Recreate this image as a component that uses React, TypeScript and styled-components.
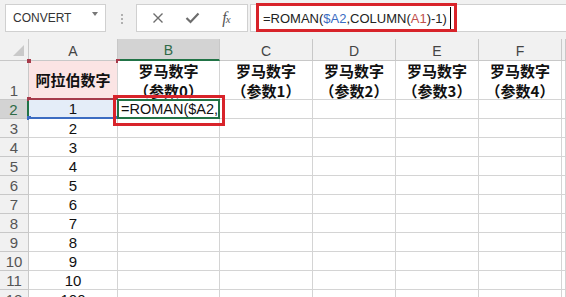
import styled, { createGlobalStyle } from 'styled-components';

const GlobalStyle = createGlobalStyle`
  html, body {
    margin: 0;
    padding: 0;
    background: #ffffff;
    overflow: hidden;
  }
  body {
    font-family: "Liberation Sans", Arial, sans-serif;
  }
`

const Page = styled.div`
  position: relative;
  width: 566px;
  height: 297px;
  overflow: hidden;
`

const Toolbar = styled.div`
  display: flex;
  align-items: flex-start;
  height: 39px;
  padding-top: 4px;
  box-sizing: border-box;
  background: #f1f1f1;
`

const NameBox = styled.div`
  display: flex;
  align-items: center;
  justify-content: space-between;
  width: 101px;
  height: 28px;
  margin-left: 5px;
  padding: 0 7px 0 7px;
  box-sizing: border-box;
  background: #fff;
  border: 1px solid #d0d0d0;
  font-size: 12px;
  color: #333;
`

const Caret = styled.span`
  width: 0;
  height: 0;
  border-left: 3px solid transparent;
  border-right: 3px solid transparent;
  border-top: 4px solid #777;
  margin-bottom: 8px;
`

const Dots = styled.div`
  display: flex;
  flex-direction: column;
  gap: 2px;
  margin: 10px 13px 0 15px;
  span {
    width: 2px;
    height: 2px;
    background: #b0b0b0;
  }
`

const ButtonBox = styled.div`
  display: flex;
  align-items: center;
  justify-content: space-around;
  width: 112px;
  height: 28px;
  box-sizing: border-box;
  padding: 0 4px;
  background: #fff;
  border: 1px solid #d0d0d0;
`

const IconSlot = styled.span`
  display: flex;
  align-items: center;
  justify-content: center;
  width: 24px;
  height: 20px;
  color: #6d6d6d;
`

const Fx = styled.span`
  font-family: "Liberation Serif", "Times New Roman", serif;
  font-style: italic;
  font-size: 16px;
  color: #555;
  letter-spacing: -1px;
  sub {
    font-size: 11px;
    vertical-align: baseline;
  }
`

const FormulaBox = styled.div`
  display: flex;
  align-items: center;
  flex: 1;
  height: 28px;
  margin-left: 2px;
  padding-left: 12px;
  box-sizing: border-box;
  background: #fff;
  border-top: 1px solid #d0d0d0;
  border-bottom: 1px solid #d0d0d0;
  border-left: 1px solid #d0d0d0;
  font-size: 13px;
  color: #222;
  white-space: nowrap;
`

const Ref = styled.span<{ $tone: string }>`
  color: ${p => p.$tone};
`

const Cursor = styled.span`
  display: inline-block;
  width: 1px;
  height: 22px;
  margin-left: 3px;
  background: #000;
`

const Sheet = styled.div`
  display: grid;
  grid-template-columns: 29px 89px 102px 93px 83px 83px 83px 4px;
  grid-template-rows: 22px 39px repeat(11, 19px);
  font-family: "Liberation Sans", Arial, sans-serif;
`

const Corner = styled.div`
  position: relative;
  background: #f1f1f1;
  border-right: 1px solid #c8c8c8;
  border-bottom: 1px solid #c8c8c8;
  &::after {
    content: "";
    position: absolute;
    right: 4px;
    bottom: 4px;
    width: 0;
    height: 0;
    border-left: 11px solid transparent;
    border-bottom: 11px solid #c9c9c9;
  }
`

const ColHead = styled.div<{ $active?: boolean }>`
  display: flex;
  align-items: center;
  justify-content: center;
  box-sizing: border-box;
  background: ${p => (p.$active ? '#d3d3d3' : '#f1f1f1')};
  color: ${p => (p.$active ? '#2f6a46' : '#444')};
  font-size: 14px;
  border-right: 1px solid #c8c8c8;
  border-bottom: ${p => (p.$active ? '2px solid #217346' : '1px solid #c8c8c8')};
  padding-top: 2px;
`

const RowHead = styled.div<{ $active?: boolean; $tall?: boolean }>`
  display: flex;
  align-items: ${p => (p.$tall ? 'flex-end' : 'center')};
  justify-content: center;
  box-sizing: border-box;
  background: ${p => (p.$active ? '#d3d3d3' : '#f1f1f1')};
  color: ${p => (p.$active ? '#2f6a46' : '#555')};
  font-size: 15px;
  border-right: ${p => (p.$active ? '2px solid #217346' : '1px solid #c8c8c8')};
  border-bottom: 1px solid #c8c8c8;
`

const Cell = styled.div<{ $fill?: string; $edge?: string }>`
  position: relative;
  display: flex;
  align-items: center;
  justify-content: center;
  box-sizing: border-box;
  background: ${p => p.$fill || '#fff'};
  border-right: 1px solid #d4d4d4;
  border-bottom: ${p => (p.$edge ? `2px solid ${p.$edge}` : '1px solid #d4d4d4')};
  font-size: 15px;
  color: #111;
  white-space: nowrap;
`

const HeadText = styled.div`
  font-family: "Noto Sans CJK SC", "Noto Sans", sans-serif;
  font-weight: 700;
  font-size: 15px;
  line-height: 20px;
  color: #111;
  text-align: center;
  margin-top: 1px;
`

const Handle = styled.span<{ $tone: string; $x: 'l' | 'r'; $y: 't' | 'b' }>`
  position: absolute;
  width: 4px;
  height: 4px;
  background: ${p => p.$tone};
  ${p => (p.$x === 'l' ? 'left: -2px;' : 'right: -3px;')}
  ${p => (p.$y === 't' ? 'top: -2px;' : 'bottom: -3px;')}
`

const EditCell = styled.div`
  position: relative;
  display: flex;
  align-items: center;
  box-sizing: border-box;
  overflow: hidden;
  border: 2px solid #217346;
  margin: -1px 0 0 -1px;
  padding-left: 2px;
  font-size: 14.5px;
  color: #111;
  white-space: nowrap;
  background: #fff;
`

const Mark = styled.div`
  position: absolute;
  border: 3px solid #d8232a;
  box-sizing: border-box;
  pointer-events: none;
`

const XIcon = () => (
  <svg width="12" height="12" viewBox="0 0 12 12">
    <path d="M1.5 1.5 L10.5 10.5 M10.5 1.5 L1.5 10.5" stroke="currentColor" strokeWidth="1.4" fill="none" />
  </svg>
)

const CheckIcon = () => (
  <svg width="15" height="12" viewBox="0 0 15 12">
    <path d="M1.5 6 L5.5 10 L13.5 1.5" stroke="currentColor" strokeWidth="2.2" fill="none" />
  </svg>
)

const headers = ['A', 'B', 'C', 'D', 'E', 'F']

export default function App() {
  const rows = [2, 3, 4, 5, 6, 7, 8, 9, 10, 11, 12]

  return (
    <>
      <GlobalStyle />
      <Page>
        <Toolbar>
          <NameBox>
            <span>CONVERT</span>
            <Caret />
          </NameBox>
          <Dots><span /><span /><span /></Dots>
          <ButtonBox>
            <IconSlot><XIcon /></IconSlot>
            <IconSlot><CheckIcon /></IconSlot>
            <IconSlot><Fx>f<sub>x</sub></Fx></IconSlot>
          </ButtonBox>
          <FormulaBox>
            =ROMAN(<Ref $tone="#3b6cc2">$A2</Ref>,COLUMN(<Ref $tone="#c0504d">A1</Ref>)-1)
            <Cursor />
          </FormulaBox>
        </Toolbar>

        <Sheet>
          <Corner />
          {headers.map(h => (
            <ColHead key={h} $active={h === 'B'}>{h}</ColHead>
          ))}
          <ColHead />

          {/* row 1: titles */}
          <RowHead $tall>1</RowHead>
          <Cell $fill="#fbe4e4" $edge="#a63a4a">
            <HeadText>阿拉伯数字</HeadText>
            <Handle $tone="#a63a4a" $x="l" $y="t" />
            <Handle $tone="#a63a4a" $x="r" $y="t" />
            <Handle $tone="#a63a4a" $x="l" $y="b" />
            <Handle $tone="#a63a4a" $x="r" $y="b" />
          </Cell>
          {[0, 1, 2, 3, 4].map(n => (
            <Cell key={n}>
              <HeadText>罗马数字<br />（参数{n}）</HeadText>
            </Cell>
          ))}
          <Cell />

          {rows.map(r => (
            <Row key={r} r={r} />
          ))}
        </Sheet>

        <Mark style={{ left: 256, top: 3, width: 201, height: 29 }} />
        <Mark style={{ left: 113, top: 95, width: 112, height: 31 }} />
      </Page>
    </>
  )
}

function Row({ r }: { r: number }) {
  const value = r - 1
  const label = value === 11 ? '100' : String(value)
  return (
    <>
      <RowHead $active={r === 2}>{r}</RowHead>
      {r === 2 ? (
        <Cell $fill="#e4edf8" $edge="#3b6cc2">
          {label}
          <Handle $tone="#3b6cc2" $x="l" $y="b" />
          <Handle $tone="#3b6cc2" $x="r" $y="b" />
        </Cell>
      ) : (
        <Cell>{label}</Cell>
      )}
      {r === 2 ? (
        <EditCell>=ROMAN($A2,COLUMN(A1)-1)</EditCell>
      ) : (
        <Cell />
      )}
      <Cell />
      <Cell />
      <Cell />
      <Cell />
      <Cell />
    </>
  )
}
